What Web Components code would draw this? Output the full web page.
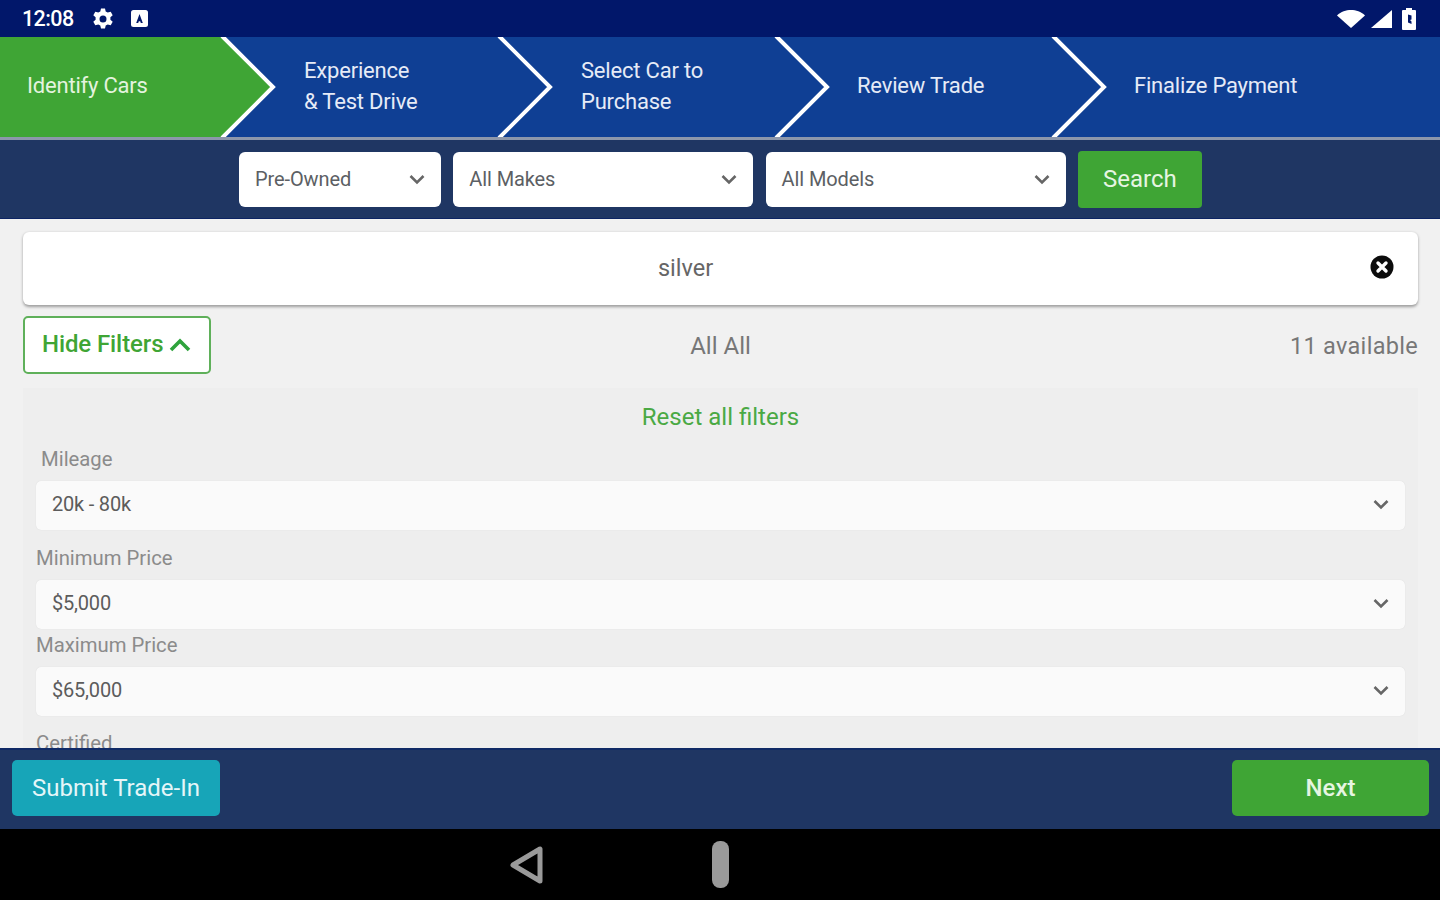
<!DOCTYPE html>
<html>
<head>
<meta charset="utf-8">
<title>Identify Cars</title>
<style>
html,body{margin:0;padding:0;height:100%;background:#f1f1f1;}
body{font-family:Roboto,"Liberation Sans",sans-serif;overflow:hidden;}
app-shell{width:1440px;height:900px;}
</style>
</head>
<body>
<app-shell>
  <status-bar slot="top"></status-bar>
  <step-bar slot="top">
    <step-item active>Identify Cars</step-item>
    <step-item>Experience<br>&amp; Test Drive</step-item>
    <step-item>Select Car to<br>Purchase</step-item>
    <step-item nudge>Review Trade</step-item>
    <step-item nudge last>Finalize Payment</step-item>
  </step-bar>
  <search-bar slot="top">
    <drop-select w="202">Pre-Owned</drop-select>
    <drop-select w="300">All Makes</drop-select>
    <drop-select w="300">All Models</drop-select>
    <green-button>Search</green-button>
  </search-bar>
  <keyword-card>silver</keyword-card>
  <result-row></result-row>
  <filter-panel>
    <filter-field label="Mileage" value="20k - 80k" indent></filter-field>
    <filter-field label="Minimum Price" value="$5,000" gap="15"></filter-field>
    <filter-field label="Maximum Price" value="$65,000" gap="3"></filter-field>
    <filter-field label="Certified" gap="14"></filter-field>
  </filter-panel>
  <action-bar slot="bottom"></action-bar>
  <nav-bar slot="bottom"></nav-bar>
</app-shell>

<script>
const chevron = '<svg viewBox="0 0 24 24" width="24" height="24" fill="none" stroke="currentColor" stroke-width="2.6"><path d="M5.5 9l6.5 6.5L18.500 9"/></svg>';

function define(name, css, html, setup){
  customElements.define(name, class extends HTMLElement{
    connectedCallback(){
      if(this.shadowRoot) return;
      const root = this.attachShadow({mode:'open'});
      root.innerHTML = `<style>${css}</style>` + (typeof html === 'function' ? html(this) : html);
      if(setup) setup(this, root);
    }
  });
}

define('app-shell', `
  :host{display:flex;flex-direction:column;}
  main{flex:1;min-height:0;overflow:hidden;display:flex;flex-direction:column;padding:13px 22px 0 23px;background:#f1f1f1;}
`, `<slot name="top"></slot><main><slot></slot></main><slot name="bottom"></slot>`);

define('status-bar', `
  :host{display:flex;align-items:center;height:37px;background:#01176a;color:#fff;padding:0 23px 0 22px;box-sizing:border-box;font-size:21.500px;letter-spacing:-.6px;font-weight:500;}
  .time{width:60px;}
  .gear{margin-left:9px;}
  .a{margin-left:15px;width:19px;height:19px;}
  .right{margin-left:auto;display:flex;align-items:center;}
  svg{display:block;}
`, `<span class="time">12:08</span>
  <svg class="gear" width="24" height="24" viewBox="0 0 24 24"><path fill="#fff" fill-rule="evenodd" d="M10 1.500h4l.7 3 2 1.100 3-.9 2 3.500-2.300 2.100v2.400l2.300 2.100-2 3.500-3-.9-2 1.100-.7 3h-4l-.7-3-2-1.100-3 .9-2-3.500 2.300-2.100v-2.400L2.300 8.200l2-3.500 3 .9 2-1.100zM12 8.500a3.500 3.500 0 100 7 3.500 3.500 0 000-7z"/></svg>
  <svg class="a" viewBox="0 0 19 19"><rect x="1" y="1" width="17" height="17" rx="2.500" fill="#fff"/><path d="M9.500 5l3.300 9h-2l-.6-1.800H8.800L8.200 14h-2z" fill="#01176a"/></svg>
  <span class="right">
    <svg width="30" height="20" viewBox="0 0 30 20"><path fill="#fff" d="M1 6.500C5 2.500 10 1 15 1s10 1.500 14 5.500L15 19z"/></svg>
    <svg width="23" height="20" viewBox="0 0 23 20" style="margin-left:4px"><path fill="#fff" d="M1 19L22 1v18z"/></svg>
    <svg width="16" height="24" viewBox="0 0 16 24" style="margin-left:8px"><path fill="#fff" fill-rule="evenodd" d="M5 1h6v2h3a1 1 0 011 1v18a1 1 0 01-1 1H2a1 1 0 01-1-1V4a1 1 0 011-1h3zM7 7.500l3.500 1v4L9 13l1.500 1.500V17L7 15.500z"/></svg>
  </span>`);

define('step-bar', `
  :host{display:flex;height:103px;box-sizing:border-box;background:#0f3f94;border-bottom:3px solid #8d97ab;}
`, `<slot></slot>`);

define('step-item', `
  :host{position:relative;display:flex;align-items:center;flex:0 0 277px;box-sizing:border-box;padding:0 0 3px 27px;color:#e6ebf7;font-size:22px;line-height:31px;letter-spacing:-.2px;}
  :host([last]){flex:1;}
  :host([nudge]){padding-left:26px;}
  :host([active]){color:#e4f3df;}
  svg{position:absolute;left:0;top:0;width:277px;height:100px;z-index:1;}
  span{position:relative;z-index:2;}
`, el => `<svg viewBox="0 0 277 100">
    ${el.hasAttribute('active') ? '<path fill="#3fa535" d="M0 0H222L273 50 222 100H0z"/>' : ''}
    ${el.hasAttribute('last') ? '' : '<path fill="none" stroke="#fff" stroke-width="4" d="M222-1L273 50 222 101"/>'}
  </svg><span><slot></slot></span>`);

define('search-bar', `
  :host{display:flex;justify-content:flex-start;align-items:center;gap:12.300px;height:79px;box-sizing:border-box;background:#1f3663;border-bottom:1px solid #0c2464;padding:0 0 0 239px;}
`, `<slot></slot>`);

define('drop-select', `
  :host{display:flex;align-items:center;justify-content:space-between;height:55px;box-sizing:border-box;background:#fff;border-radius:6px;padding:0 12px 0 16px;color:#5c5f64;font-size:20px;letter-spacing:-.1px;}
  svg{color:#666;display:block;}
`, el => { el.style.width = el.getAttribute('w') + 'px'; return `<slot></slot>${chevron}`; });

define('green-button', `
  :host{display:flex;align-items:center;justify-content:center;width:124px;height:57px;background:#3fa535;border-radius:4px;color:#e6f5e2;font-size:24px;}
`, `<slot></slot>`);

define('keyword-card', `
  :host{position:relative;display:block;flex:none;height:73px;line-height:72px;background:#fff;border-radius:6px;box-shadow:0 1.500px 3px rgba(0,0,0,.35);text-align:center;padding-right:70px;color:#666;font-size:23.500px;}
  svg{position:absolute;right:24px;top:23px;}
`, `<slot></slot><svg width="24" height="24" viewBox="0 0 24 24"><circle cx="12" cy="12" r="11.500" fill="#0c0c0c"/><path d="M8 8l8 8M16 8l-8 8" stroke="#fff" stroke-width="3.400" stroke-linecap="round"/></svg>`);

define('result-row', `
  :host{display:grid;grid-template-columns:1fr auto 1fr;align-items:center;flex:none;margin-top:11px;height:58px;color:#777;font-size:24px;}
  button{display:flex;align-items:center;justify-self:start;width:188px;height:58px;box-sizing:border-box;padding:0 0 2px 17px;background:#fff;border:2px solid #5fb05a;border-radius:5px;color:#3fa535;font:500 24px Roboto,sans-serif;letter-spacing:-.1px;}
  svg{margin-left:5px;}
  .count{justify-self:end;letter-spacing:.3px;font-size:23.500px;}
  span{padding-top:2px;}
`, `<button>Hide Filters<svg width="24" height="24" viewBox="0 0 24 24" fill="none" stroke="#2ea33c" stroke-width="3.600"><path d="M3 18l9-9 9 9"/></svg></button>
  <span>All All</span><span class="count">11 available</span>`);

define('filter-panel', `
  :host{display:block;flex:1;min-height:0;overflow:hidden;margin-top:14px;background:#eee;padding:0 13px;}
  .reset{display:block;text-align:center;color:#4aa944;font-size:24px;line-height:28px;margin-top:15px;margin-bottom:15px;}
`, `<span class="reset">Reset all filters</span><slot></slot>`);

define('filter-field', `
  :host{display:block;}
  label{display:block;color:#8b8b8b;font-size:20.300px;line-height:26px;}
  :host([indent]) label{padding-left:5px;}
  .box{display:flex;align-items:center;justify-content:space-between;height:49px;box-sizing:border-box;margin-top:9px;padding:0 12px 3px 16px;background:#fafafa;border-radius:5px;box-shadow:0 0 1px rgba(0,0,0,.12);color:#5c5c5c;font-size:20px;letter-spacing:-.2px;}
  svg{color:#666;display:block;}
`, el => {
  const gap = el.getAttribute('gap');
  if(gap) el.style.marginTop = gap + 'px';
  const value = el.getAttribute('value');
  return `<label>${el.getAttribute('label')}</label>` + (value ? `<div class="box"><span>${value}</span>${chevron}</div>` : '');
});

define('action-bar', `
  :host{display:flex;align-items:flex-start;justify-content:space-between;height:81px;box-sizing:border-box;background:#1f3663;border-top:2px solid #102a66;padding:10px 11px 0 12px;font-size:24px;}
  .trade,.next{display:flex;align-items:center;justify-content:center;height:56px;border-radius:5px;}
  .trade{width:208px;background:#17a5b8;color:#e4f6f8;}
  .next{width:197px;background:#3fa535;color:#e6f5e2;font-weight:500;}
`, `<div class="trade">Submit Trade-In</div><div class="next">Next</div>`);

define('nav-bar', `
  :host{display:flex;align-items:center;height:71px;background:#000;padding-left:509px;}
  .home{width:17px;height:47px;border-radius:8px;background:#9a9a9a;margin-left:167px;}
  svg{display:block;}
`, `<svg width="36" height="40" viewBox="0 0 36 40"><path d="M31 4v32L4 20z" fill="none" stroke="#9a9a9a" stroke-width="5" stroke-linejoin="round"/></svg><div class="home"></div>`);
</script>
</body>
</html>
